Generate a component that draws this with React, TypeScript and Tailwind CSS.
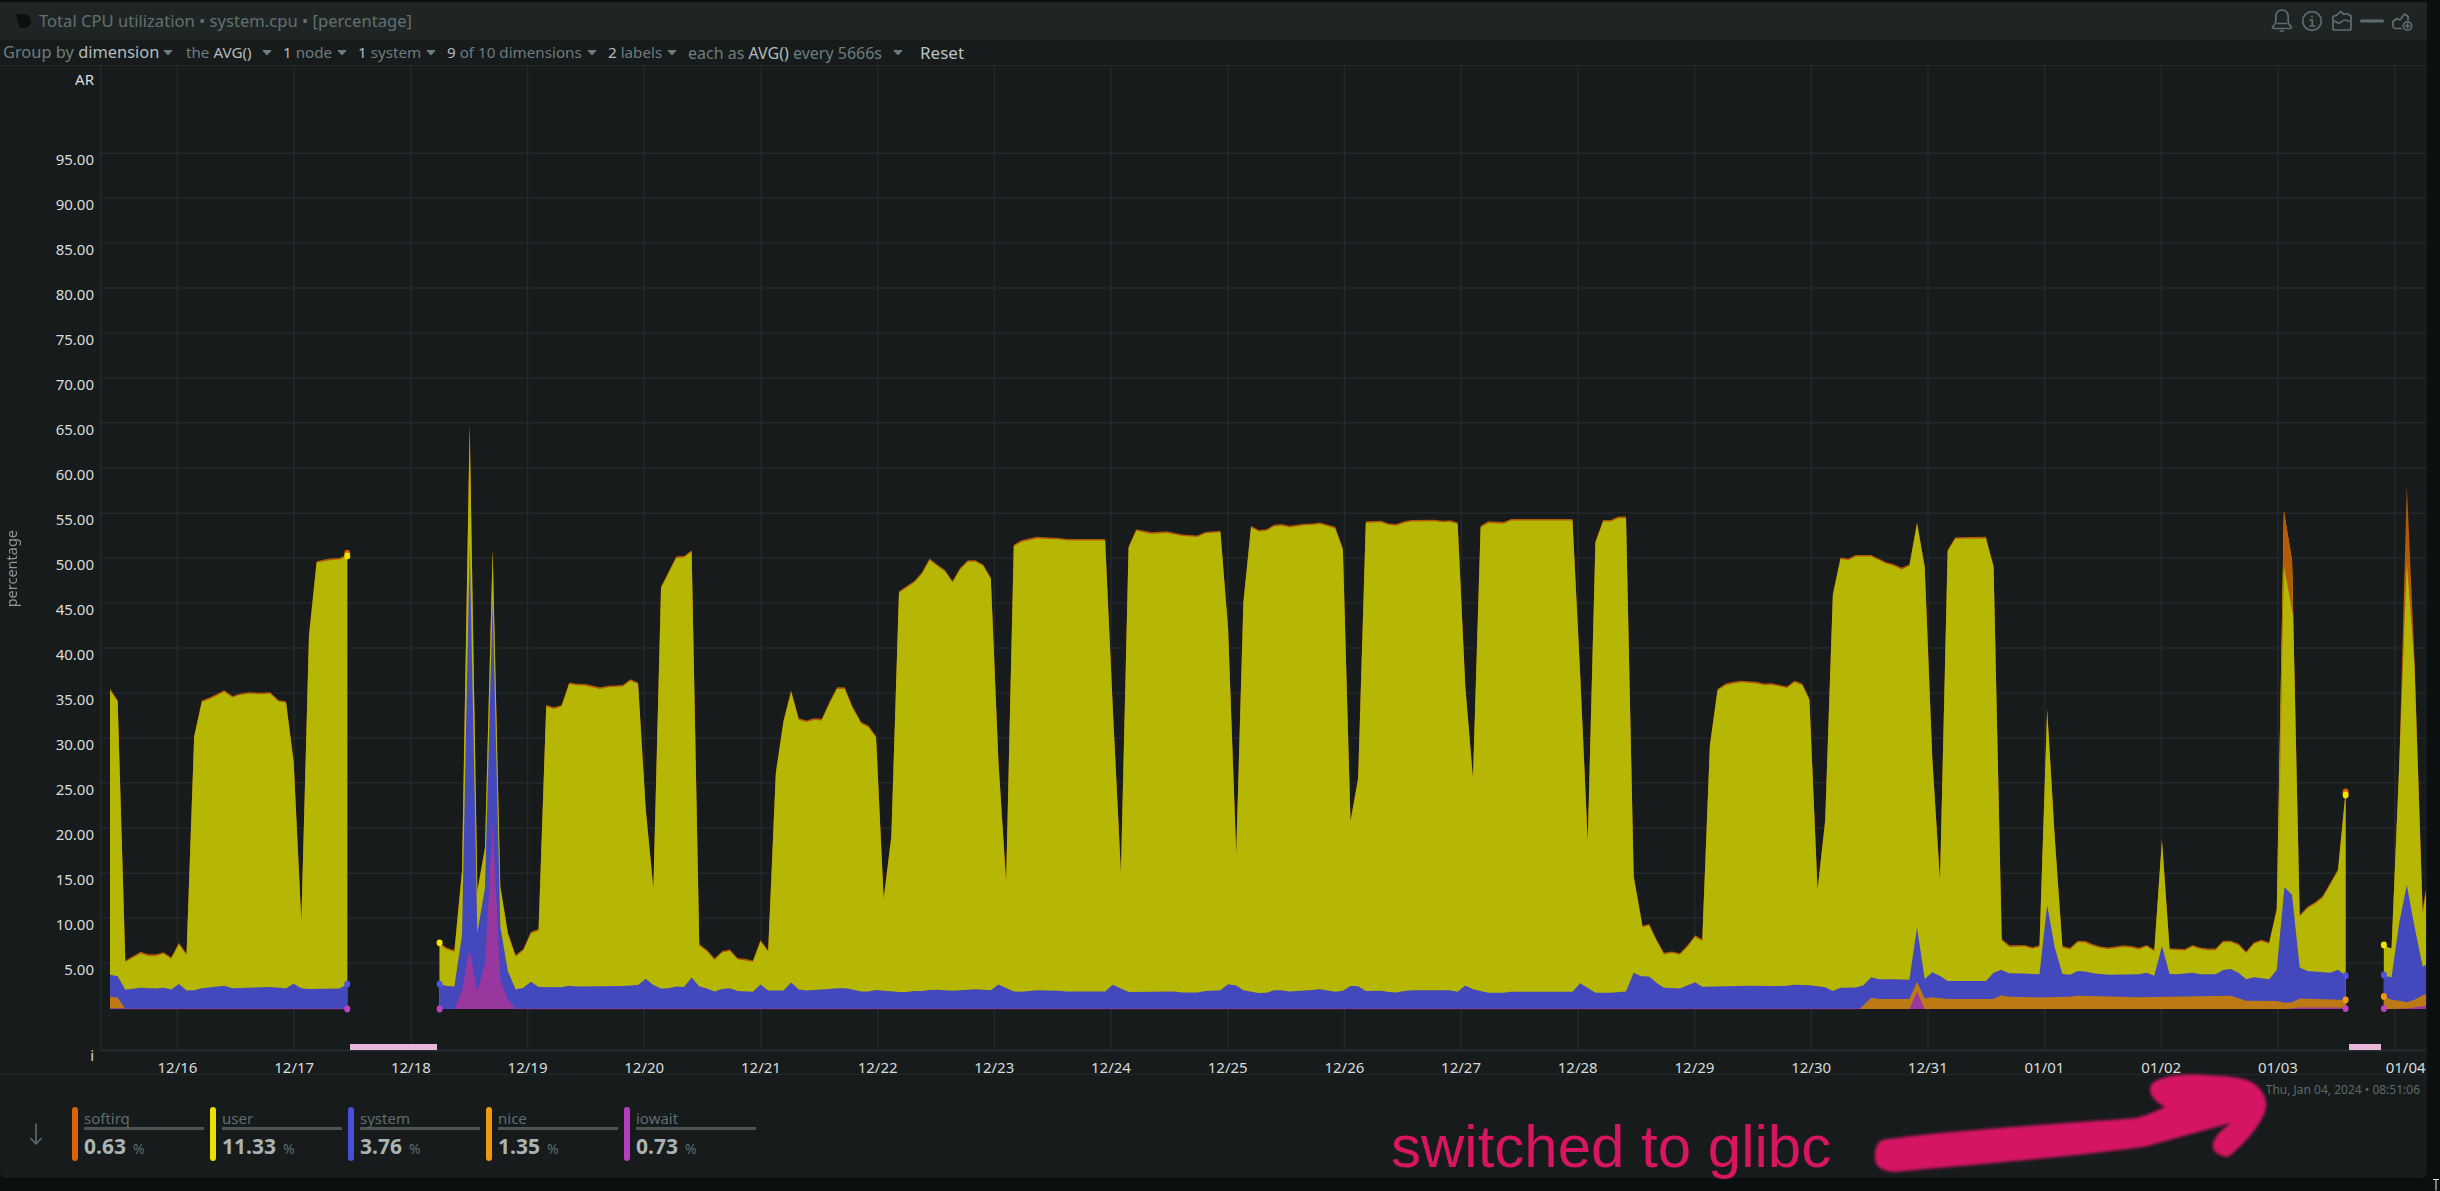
import React from "react";

type Pt = [number, number];

// Points were read off zoomed crops of the chart, so each list goes through
// the crop's origin and scale to land on page pixels.
const crop = (ox: number, sx: number, oy: number, sy: number) => (pts: Pt[]): Pt[] =>
  pts.map(([x, y]) => [ox + x / sx, oy + y / sy]);
const a = crop(60, 1.96, 400, 2.45);
const b = crop(850, 1.96, 500, 2.904);
const c = crop(1640, 1.96, 480, 2.8);

const BASE = 1009;

// --- first run of samples (before the 12/18 gap)
const seg1Top = a([[98,707],[113,735],[128,1373],[158,1352],[173,1358],[188,1358],[203,1353],[218,1365],[233,1330],[248,1356],[263,822],[278,736],[293,729],[322,711],[338,725],[353,719],[370,716],[395,717],[412,716],[428,735],[443,738],[458,885],[473,1275],[488,575],[503,395],[518,391],[533,388],[548,387],[563,378]]);
const seg1System = a([[98,1408],[113,1412],[128,1445],[158,1440],[188,1442],[203,1440],[218,1444],[233,1431],[248,1447],[263,1446],[278,1441],[322,1435],[338,1441],[412,1438],[443,1441],[458,1430],[473,1441],[488,1443],[548,1442],[563,1431]]);
const seg1Nice = a([[98,1462],[113,1464],[128,1492]]);

// --- long middle run
const seg2Top: Pt[] = [
  ...a([[744,1330],[758,1342],[773,1348],[788,1150],[803,58],[818,1200],[833,1095],[848,365],[863,1190],[878,1305],[893,1360],[908,1345],[923,1303],[938,1296],[953,747],[968,753],[983,747],[998,692],[1013,695],[1030,696],[1058,704],[1075,700],[1103,698],[1118,684],[1133,692],[1148,1000],[1163,1195],[1178,457],[1193,420],[1208,383],[1223,382],[1238,368],[1253,1333],[1268,1347],[1283,1368],[1298,1350],[1313,1346],[1328,1367],[1343,1369],[1358,1373],[1373,1323],[1388,1348],[1403,912],[1418,785],[1433,711],[1448,780],[1463,785],[1478,780],[1493,781],[1508,740],[1523,704],[1538,704],[1553,750]]),
  ...b([[22,645],[36,655],[51,685],[66,1155],[81,975],[96,265],[111,250],[126,235],[141,210],[156,170],[171,187],[186,203],[201,235],[216,197],[231,175],[246,175],[261,187],[276,225],[291,760],[306,1105],[321,130],[336,117],[351,112],[366,107],[410,110],[425,113],[500,113],[515,600],[531,1080],[546,135],[561,85],[591,94],[621,91],[651,100],[681,103],[696,93],[726,89],[741,370],[757,1025],[771,295],[786,75],[801,87],[816,85],[831,72],[846,70],[861,75],[891,69],[906,68],[921,65],[951,78],[966,140],[981,930],[996,805],[1011,62],[1041,60],[1056,68],[1071,70],[1086,62],[1101,58],[1146,57],[1161,60],[1176,59],[1191,65],[1206,540],[1221,805],[1236,75],[1251,62],[1281,64],[1296,55],[1416,55],[1431,500],[1446,990],[1461,120],[1476,58],[1491,58],[1506,48],[1521,48],[1536,1090]]),
  ...c([[5,1248],[18,1243],[32,1285],[47,1324],[63,1320],[78,1325],[93,1303],[108,1275],[122,1286],[137,740],[152,585],[168,570],[183,565],[198,562],[228,565],[243,570],[258,569],[288,578],[303,562],[318,570],[332,612],[348,1145],[363,950],[378,318],[393,217],[408,220],[423,210],[453,210],[483,230],[498,236],[513,246],[528,236],[543,118],[558,240],[573,780],[588,1120],[603,195],[618,160],[678,159],[693,240],[709,1285],[724,1303],[754,1302],[769,1308],[783,1303],[798,640],[813,1000],[828,1305],[843,1310],[858,1290],[873,1291],[888,1300],[903,1306],[918,1309],[948,1303],[963,1305],[978,1310],[993,1302],[1008,1315],[1023,1005],[1038,1311],[1068,1313],[1083,1302],[1098,1309],[1113,1312],[1128,1312],[1143,1290],[1158,1290],[1173,1298],[1188,1320],[1203,1295],[1218,1287],[1233,1294],[1248,1200],[1262,85],[1278,225],[1293,1218],[1308,1195],[1323,1182],[1338,1165],[1353,1128],[1368,1090],[1383,870]]),
];
const seg2System: Pt[] = [
  ...a([[744,1431],[758,1436],[773,1437],[788,1310],[803,350],[818,1305],[833,1195],[848,490],[863,1290],[878,1400],[893,1444],[908,1440],[923,1425],[938,1438],[983,1439],[998,1435],[1013,1437],[1103,1436],[1133,1433],[1148,1418],[1163,1433],[1178,1442],[1193,1441],[1208,1437],[1223,1438],[1238,1415],[1253,1437],[1268,1442],[1283,1449],[1298,1443],[1313,1441],[1328,1448],[1358,1450],[1373,1432],[1388,1447],[1418,1447],[1433,1427],[1448,1444],[1463,1447],[1508,1443],[1523,1441],[1538,1441]]),
  ...b([[0,1420],[22,1427],[36,1427],[51,1423],[96,1429],[111,1429],[126,1426],[141,1426],[156,1423],[171,1422],[201,1425],[246,1421],[276,1424],[291,1407],[321,1427],[336,1428],[366,1424],[410,1425],[425,1427],[500,1427],[515,1408],[546,1429],[636,1427],[651,1430],[681,1430],[696,1426],[726,1424],[741,1406],[757,1410],[771,1424],[801,1432],[816,1431],[831,1424],[846,1424],[861,1427],[906,1423],[921,1421],[951,1428],[966,1425],[981,1411],[996,1412],[1011,1426],[1041,1425],[1056,1429],[1071,1430],[1086,1426],[1101,1424],[1176,1424],[1191,1428],[1206,1410],[1221,1421],[1251,1431],[1281,1431],[1296,1428],[1416,1428],[1431,1403],[1461,1431],[1491,1431],[1521,1427],[1536,1373],[1551,1383]]),
  ...c([[18,1390],[32,1408],[47,1422],[78,1424],[108,1406],[122,1419],[152,1418],[213,1416],[258,1417],[288,1416],[303,1413],[333,1415],[363,1420],[378,1431],[393,1422],[423,1421],[438,1415],[453,1392],[468,1398],[498,1398],[528,1399],[543,1253],[558,1397],[573,1378],[588,1389],[603,1403],[678,1403],[693,1380],[708,1371],[723,1381],[753,1382],[783,1384],[798,1190],[813,1310],[828,1383],[843,1385],[858,1375],[873,1376],[888,1381],[918,1385],[978,1384],[993,1380],[1008,1388],[1023,1305],[1038,1383],[1053,1384],[1083,1380],[1098,1384],[1128,1384],[1143,1372],[1158,1369],[1173,1380],[1188,1398],[1203,1392],[1233,1398],[1248,1372],[1263,1140],[1278,1162],[1293,1365],[1308,1375],[1353,1380],[1368,1371],[1383,1388]]),
];
const seg2Nice = c([[430,1482],[453,1450],[468,1453],[528,1453],[543,1405],[558,1452],[573,1448],[603,1453],[693,1453],[708,1443],[723,1447],[783,1449],[843,1447],[858,1444],[978,1448],[1128,1445],[1158,1444],[1188,1458],[1248,1459],[1263,1464],[1278,1462],[1293,1452],[1368,1455],[1383,1456]]);
const seg2IowaitA = a([[773,1492],[788,1445],[803,1345],[818,1450],[833,1380],[848,1035],[863,1420],[878,1470],[893,1492]]);
const seg2IowaitB = c([[528,1482],[543,1433],[558,1482]]);
const seg2IowaitC = c([[1263,1482],[1293,1477],[1383,1477]]);

// --- last run, cut off by the panel edge
const seg3Top = c([[1458,1305],[1473,1312],[1488,800],[1503,18],[1518,500],[1534,1200],[1541,1140]]);
const seg3User = c([[1458,1305],[1473,1312],[1488,800],[1503,230],[1518,520],[1534,1215],[1541,1152]]);
const seg3System = c([[1458,1388],[1473,1392],[1488,1240],[1503,1135],[1518,1250],[1534,1362],[1541,1358]]);
const seg3Nice = c([[1458,1447],[1473,1455],[1488,1458],[1503,1462],[1518,1455],[1534,1443],[1541,1440]]);
const seg3Iowait = c([[1458,1482],[1503,1480],[1541,1472]]);

// softirq wedge on the 01/03 spike, drawn over the yellow
const softirqWedge = c([[1250,1190],[1262,85],[1278,225],[1280,380],[1262,240]]);

const area = (pts: Pt[]) =>
  [...pts, [pts[pts.length - 1][0], BASE], [pts[0][0], BASE]].map((p) => p.join(",")).join(" ");
const lowered = (pts: Pt[]): Pt[] => pts.map(([x, y]) => [x, y + 1.6]);

const COLORS = {
  softirq: "#b35a05",
  user: "#b6b604",
  system: "#4348bc",
  nice: "#bd7a14",
  iowait: "#9a379f",
};

const yLabels = ["95.00","90.00","85.00","80.00","75.00","70.00","65.00","60.00","55.00","50.00","45.00","40.00","35.00","30.00","25.00","20.00","15.00","10.00","5.00"];
const xLabels = ["12/16","12/17","12/18","12/19","12/20","12/21","12/22","12/23","12/24","12/25","12/26","12/27","12/28","12/29","12/30","12/31","01/01","01/02","01/03","01/04"];

const legend = [
  { name: "softirq", value: "0.63", color: "bg-[#d96404]" },
  { name: "user", value: "11.33", color: "bg-[#e8e000]" },
  { name: "system", value: "3.76", color: "bg-[#4a4fd8]" },
  { name: "nice", value: "1.35", color: "bg-[#f0980f]" },
  { name: "iowait", value: "0.73", color: "bg-[#b63cc0]" },
];

const dots: [Pt, string][] = [
  [a([[563,375]])[0], "#e05a00"],
  [a([[563,382]])[0], "#f0e400"],
  [a([[563,1431]])[0], "#4d52e0"],
  [a([[563,1492]])[0], "#c040c0"],
  [a([[744,1330]])[0], "#f0e400"],
  [a([[744,1431]])[0], "#4d52e0"],
  [a([[744,1492]])[0], "#c040c0"],
  [c([[1383,873]])[0], "#e05a00"],
  [c([[1383,882]])[0], "#f0e400"],
  [c([[1383,1388]])[0], "#4d52e0"],
  [c([[1383,1456]])[0], "#f0980f"],
  [c([[1383,1480]])[0], "#c040c0"],
  [c([[1458,1302]])[0], "#f0e400"],
  [c([[1458,1386]])[0], "#4d52e0"],
  [c([[1458,1446]])[0], "#f0980f"],
  [c([[1458,1480]])[0], "#c040c0"],
];

const Chevron = () => (
  <svg width="10" height="7" viewBox="0 0 10 7" className="shrink-0">
    <path d="M1.2 1.5h7.600L5 5.600z" fill="#6d7d7d" stroke="#6d7d7d" strokeWidth="1.200" strokeLinejoin="round" />
  </svg>
);

function Plot() {
  return (
    <svg width="2326" height="986" viewBox="100 66 2326 986" className="block shrink-0">
      {yLabels.map((_, i) => (
        <line key={i} x1="100" x2="2426" y1={153 + i * 45} y2={153 + i * 45} stroke="#23292b" strokeWidth="1.500" />
      ))}
      {xLabels.map((_, i) => (
        <line key={i} x1={177.5 + i * 116.7} x2={177.5 + i * 116.7} y1="66" y2="1050" stroke="#23292b" strokeWidth="1.500" />
      ))}
      <line x1="100.5" x2="100.5" y1="66" y2="1050" stroke="#262d2f" strokeWidth="1.500" />
      <line x1="100" x2="2426" y1="1050.5" y2="1050.5" stroke="#262d2f" strokeWidth="2" />

      {/* pink annotation blocks over the gaps */}
      <rect x="350" y="1044" width="87" height="6" fill="#e8b6d9" />
      <rect x="2349" y="1044" width="32" height="6" fill="#e8b6d9" />

      <polygon points={area(seg1Top)} fill={COLORS.softirq} />
      <polygon points={area(lowered(seg1Top))} fill={COLORS.user} />
      <polygon points={area(seg1System)} fill={COLORS.system} />
      <polygon points={area(seg1Nice)} fill={COLORS.nice} />

      <polygon points={area(seg2Top)} fill={COLORS.softirq} />
      <polygon points={area(lowered(seg2Top))} fill={COLORS.user} />
      <polygon points={softirqWedge.map((p) => p.join(",")).join(" ")} fill={COLORS.softirq} />
      <polygon points={area(seg2System)} fill={COLORS.system} />
      <polygon points={area(seg2Nice)} fill={COLORS.nice} />
      <polygon points={area(seg2IowaitA)} fill={COLORS.iowait} />
      <polygon points={area(seg2IowaitB)} fill={COLORS.iowait} />
      <polygon points={area(seg2IowaitC)} fill={COLORS.iowait} />

      <polygon points={area(seg3Top)} fill={COLORS.softirq} />
      <polygon points={area(seg3User)} fill={COLORS.user} />
      <polygon points={area(seg3System)} fill={COLORS.system} />
      <polygon points={area(seg3Nice)} fill={COLORS.nice} />
      <polygon points={area(seg3Iowait)} fill={COLORS.iowait} />

      <line x1="110" x2="347" y1="1008.7" y2="1008.7" stroke="#7d3fa6" strokeWidth="1" />
      <line x1="516" x2="1860" y1="1008.7" y2="1008.7" stroke="#7d3fa6" strokeWidth="1" />

      {dots.map(([[x, y], fill], i) => (
        <ellipse key={i} cx={x} cy={y} rx="3" ry="3.400" fill={fill} />
      ))}
    </svg>
  );
}

const HeaderIcons = () => (
  <div className="flex items-center gap-[6px] text-[#5e6e6e]">
    {/* bell */}
    <svg width="24" height="26" viewBox="0 0 24 26" fill="none" stroke="currentColor" strokeWidth="1.700" strokeLinejoin="round" strokeLinecap="round">
      <path d="M12 2c-4.200 0-6.200 3.200-6.200 7v4.500c0 2-1.300 3.600-3.200 5.400 0 1 .6 1.600 1.500 1.600h15.800c.9 0 1.500-.6 1.500-1.600-1.900-1.800-3.200-3.400-3.200-5.400V9c0-3.800-2-7-6.200-7z" />
      <path d="M7.500 15.500h9M10.500 23h3" />
    </svg>
    {/* info */}
    <svg width="24" height="24" viewBox="0 0 24 24" fill="none" stroke="currentColor" strokeWidth="1.700" strokeLinecap="round">
      <circle cx="12" cy="12" r="9.300" />
      <path d="M10 11h2.300v6M10 17h4.600" />
      <circle cx="12" cy="7.500" r="1" fill="currentColor" stroke="none" />
    </svg>
    {/* chart card */}
    <svg width="24" height="24" viewBox="0 0 24 24" fill="none" stroke="currentColor" strokeWidth="1.700" strokeLinejoin="round">
      <path d="M3 7.500l4-1.500 3.500-3.500 3.500 3 3-1 4 2.500V19a2 2 0 0 1-2 2H5a2 2 0 0 1-2-2z" />
      <path d="M3 12.500c2.500-1 4 1.500 6 1.500s3.500-3 6-3 3.500 2 6 1.500" />
    </svg>
    {/* collapse */}
    <svg width="24" height="24" viewBox="0 0 24 24" fill="none" stroke="currentColor" strokeWidth="3" strokeLinecap="round">
      <path d="M1.500 12h21" />
    </svg>
    {/* add chart */}
    <svg width="24" height="24" viewBox="0 0 24 24" fill="none" stroke="currentColor" strokeWidth="1.700" strokeLinejoin="round" strokeLinecap="round">
      <path d="M11 19.500H5.500C4 19.500 3 18.400 3 17v-4.500l4-3 3 1.500 4.500-6 3.500 2.500V11" />
      <circle cx="17.500" cy="17" r="4.200" />
      <path d="M17.500 15v4M15.500 17h4" strokeWidth="1.500" />
    </svg>
  </div>
);

export default function App() {
  return (
    <div className="relative h-[1191px] w-[2440px] overflow-hidden bg-[#0b0f10] pt-[2px] font-['Noto_Sans',sans-serif]">
      <div className="flex h-[1176px] w-[2427px] flex-col rounded-b-md bg-[#171b1c]">
        {/* title bar */}
        <div className="flex h-[38px] items-center justify-between bg-[#1f2525] pl-[15px] pr-[13px]">
          <div className="flex items-center gap-[6px] text-[16.6px] text-[#62716f]">
            <svg width="18" height="16" viewBox="0 0 18 16">
              <path d="M1 1h7c5 0 8 3 8 7 0 4-3 7-7 7H5C3 11 2 5 1 1z" fill="#0d1011" />
            </svg>
            <span>Total CPU utilization • system.cpu • [percentage]</span>
          </div>
          <HeaderIcons />
        </div>

        {/* group by toolbar */}
        <div className="flex h-[26px] items-center border-b border-[#23292b] pl-[3px] text-[15.2px] text-[#6d7d7d]">
          <div className="flex w-[183px] items-center justify-between pr-[13px] text-[16.4px]">
            <span>Group by <span className="text-[#b3bdbd]">dimension</span></span>
            <Chevron />
          </div>
          <div className="flex w-[97px] items-center justify-between pr-[11px]">
            <span>the <span className="text-[#b3bdbd]">AVG()</span></span>
            <Chevron />
          </div>
          <div className="flex w-[75px] items-center justify-between pr-[11px]">
            <span><span className="text-[#b3bdbd]">1</span> node</span>
            <Chevron />
          </div>
          <div className="flex w-[89px] items-center justify-between pr-[11px]">
            <span><span className="text-[#b3bdbd]">1</span> system</span>
            <Chevron />
          </div>
          <div className="flex w-[161px] items-center justify-between pr-[11px]">
            <span><span className="text-[#b3bdbd]">9</span> of 10 dimensions</span>
            <Chevron />
          </div>
          <div className="flex w-[80px] items-center justify-between pr-[11px]">
            <span><span className="text-[#b3bdbd]">2</span> labels</span>
            <Chevron />
          </div>
          <div className="flex w-[232px] items-center justify-between pr-[17px] text-[16px]">
            <span>each as <span className="text-[#b3bdbd]">AVG()</span> every 5666s</span>
            <Chevron />
          </div>
          <span className="text-[17px] text-[#b9c3c3]">Reset</span>
        </div>

        {/* chart + axes */}
        <div className="flex h-[1009px] shrink-0 border-b border-[#23292b]">
          <div className="flex w-[100px] shrink-0">
            <div className="flex w-[24px] items-center justify-center pb-[2px]">
              <span className="rotate-180 text-[14.5px] text-[#8a9999] [writing-mode:vertical-rl]">percentage</span>
            </div>
            <div className="flex flex-1 flex-col items-end pr-[6px] text-[15px] text-[#d8dddd]">
              <div className="flex h-[26px] items-center">AR</div>
              <div className="mt-[44.5px]">
                {yLabels.map((l) => (
                  <div key={l} className="flex h-[45px] items-center justify-end">{l}</div>
                ))}
              </div>
              <div className="mt-[53.5px] flex h-[20px] items-center">i</div>
            </div>
          </div>
          <div className="flex flex-col">
            <Plot />
            <div className="flex h-[22px] items-center pl-[19.15px] pt-[8px] text-[15px] text-[#d8dddd]">
              {xLabels.map((l, i) => (
                <div
                  key={l}
                  className={i === xLabels.length - 1 ? "w-[89.35px] shrink-0 text-right" : "w-[116.7px] shrink-0 text-center"}
                >
                  {l}
                </div>
              ))}
            </div>
          </div>
        </div>

        {/* legend */}
        <div className="flex flex-1 items-start justify-between">
          <div className="flex items-center pt-[32px]">
            <span className="flex w-[72px] justify-center pr-[1px] text-[#5f6d6d]">
              <svg width="14" height="26" viewBox="0 0 14 26" fill="none" stroke="currentColor" strokeWidth="1.600" strokeLinecap="round" strokeLinejoin="round">
                <path d="M7 3v20M2 17.500L7 23l5-5.500" />
              </svg>
            </span>
            <div className="flex gap-[18px]">
              {legend.map((item) => (
                <div key={item.name} className="flex h-[54px] w-[120px] gap-[6px]">
                  <div className={`h-full w-[6px] shrink-0 rounded-full ${item.color}`} />
                  <div className="w-[120px] shrink-0">
                    <div className="h-[20px] text-[15px] leading-[22px] text-[#5f6d6d]">{item.name}</div>
                    <div className="h-[3px] bg-[#4a5656]" />
                    <div className="mt-[2px] flex items-baseline gap-[7px]">
                      <span className="text-[21px] font-bold leading-[28px] text-[#aab4b4]">{item.value}</span>
                      <span className="text-[14px] text-[#5f6d6d]">%</span>
                    </div>
                  </div>
                </div>
              ))}
            </div>
          </div>
          <div className="pr-[7px] pt-[6px] text-[12px] text-[#5c6a6a]">Thu, Jan 04, 2024 • 08:51:06</div>
        </div>
      </div>

      {/* hand-drawn note over the screenshot */}
      <svg width="420" height="110" viewBox="1860 1070 420 110" className="absolute left-[1860px] top-[1070px] blur-[1.5px]">
        <path
          d="M1882 1140 C1950 1130 2060 1124 2136 1118 C2148 1115 2158 1110 2165 1107 C2152 1100 2148 1092 2151 1085 C2160 1074 2190 1074 2205 1075 C2230 1076 2248 1078 2256 1085 C2266 1094 2268 1104 2265 1112 C2258 1130 2238 1150 2228 1157 C2218 1156 2211 1150 2213 1143 C2216 1134 2224 1128 2231 1123 L2144 1147 C2060 1158 1960 1166 1896 1172 C1880 1172 1874 1165 1875 1155 C1875 1147 1878 1142 1882 1140 Z"
          fill="#d51564"
        />
      </svg>
      <div className="absolute left-[1391px] top-[1112px] whitespace-nowrap font-['Liberation_Sans',sans-serif] text-[60px] leading-[69px] text-[#d81560]">
        switched to glibc
      </div>
      {/* text cursor caught in the corner */}
      <svg width="8" height="12" viewBox="0 0 8 12" className="absolute left-[2432px] top-[1179px]">
        <path d="M1 .5h6M4 .5v11" stroke="#e8e8e8" strokeWidth="1" fill="none" />
      </svg>
    </div>
  );
}
